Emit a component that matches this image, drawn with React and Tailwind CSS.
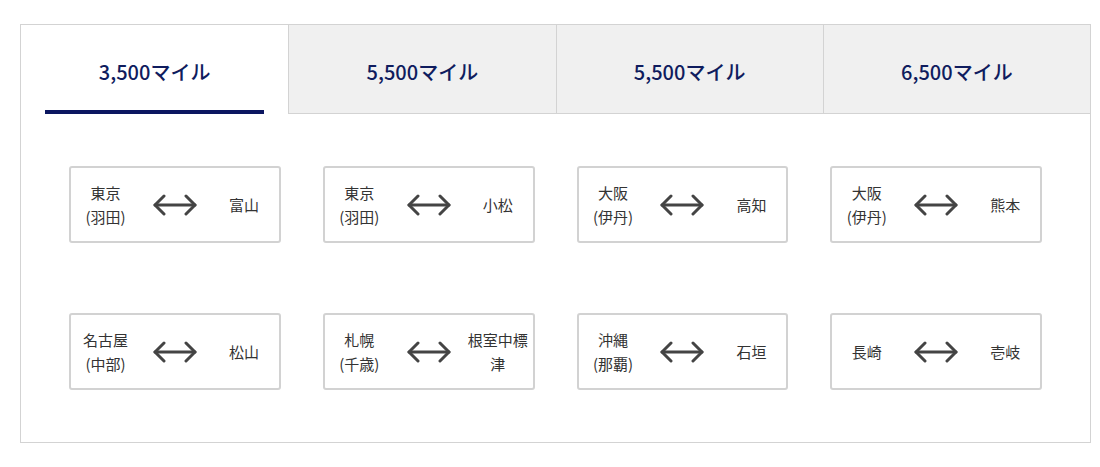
const tabs = ['3,500マイル', '5,500マイル', '5,500マイル', '6,500マイル'];

const routes = [
  { from: ['東京', '(羽田)'], to: '富山' },
  { from: ['東京', '(羽田)'], to: '小松' },
  { from: ['大阪', '(伊丹)'], to: '高知' },
  { from: ['大阪', '(伊丹)'], to: '熊本' },
  { from: ['名古屋', '(中部)'], to: '松山' },
  { from: ['札幌', '(千歳)'], to: '根室中標津' },
  { from: ['沖縄', '(那覇)'], to: '石垣' },
  { from: ['長崎'], to: '壱岐' },
];

const ArrowBoth = () => (
  <svg width="46" height="22" viewBox="0 0 46 22" fill="none" stroke="#444" strokeWidth="3" strokeLinecap="round" strokeLinejoin="round">
    <path d="M3 11h40" />
    <path d="M12 2L3 11l9 9" />
    <path d="M34 2l9 9-9 9" />
  </svg>
);

const RouteCard = ({ route }) => (
  <div className="h-[77px] grid grid-cols-3 items-center border-2 border-[#d2d2d2] rounded-[3px] bg-white text-[15px] leading-[24px] text-[#333] text-center">
    <div>
      {route.from.map((line) => (
        <div key={line}>{line}</div>
      ))}
    </div>
    <div className="flex justify-center">
      <ArrowBoth />
    </div>
    <div className="px-1">{route.to}</div>
  </div>
);

export default function App() {
  return (
    <div className="w-[1100px] h-[467px] bg-white pt-[24px] pl-[20px] pr-[9px]" style={{ fontFamily: '"Noto Sans CJK JP", "Noto Sans", sans-serif' }}>
      <div className="border border-[#d3d3d3]">
        {/* Tabs */}
        <div className="grid grid-cols-4 h-[89px]">
          {tabs.map((label, i) => (
            <div
              key={i}
              className={
                i === 0
                  ? 'relative flex items-center justify-center pt-[5px] bg-white'
                  : 'flex items-center justify-center pt-[5px] bg-[#f0f0f0] border-l border-b border-[#d3d3d3]'
              }
            >
              <span className="text-[20px] font-medium text-[#0f1c5e]">{label}</span>
              {i === 0 && <div className="absolute left-[24px] right-[24px] bottom-0 h-[4px] bg-[#0b1660]" />}
            </div>
          ))}
        </div>

        {/* Route cards */}
        <div className="grid grid-cols-4 gap-x-[42px] gap-y-[70px] px-[48px] pt-[52px] pb-[52px]">
          {routes.map((route, i) => (
            <RouteCard key={i} route={route} />
          ))}
        </div>
      </div>
    </div>
  );
}
